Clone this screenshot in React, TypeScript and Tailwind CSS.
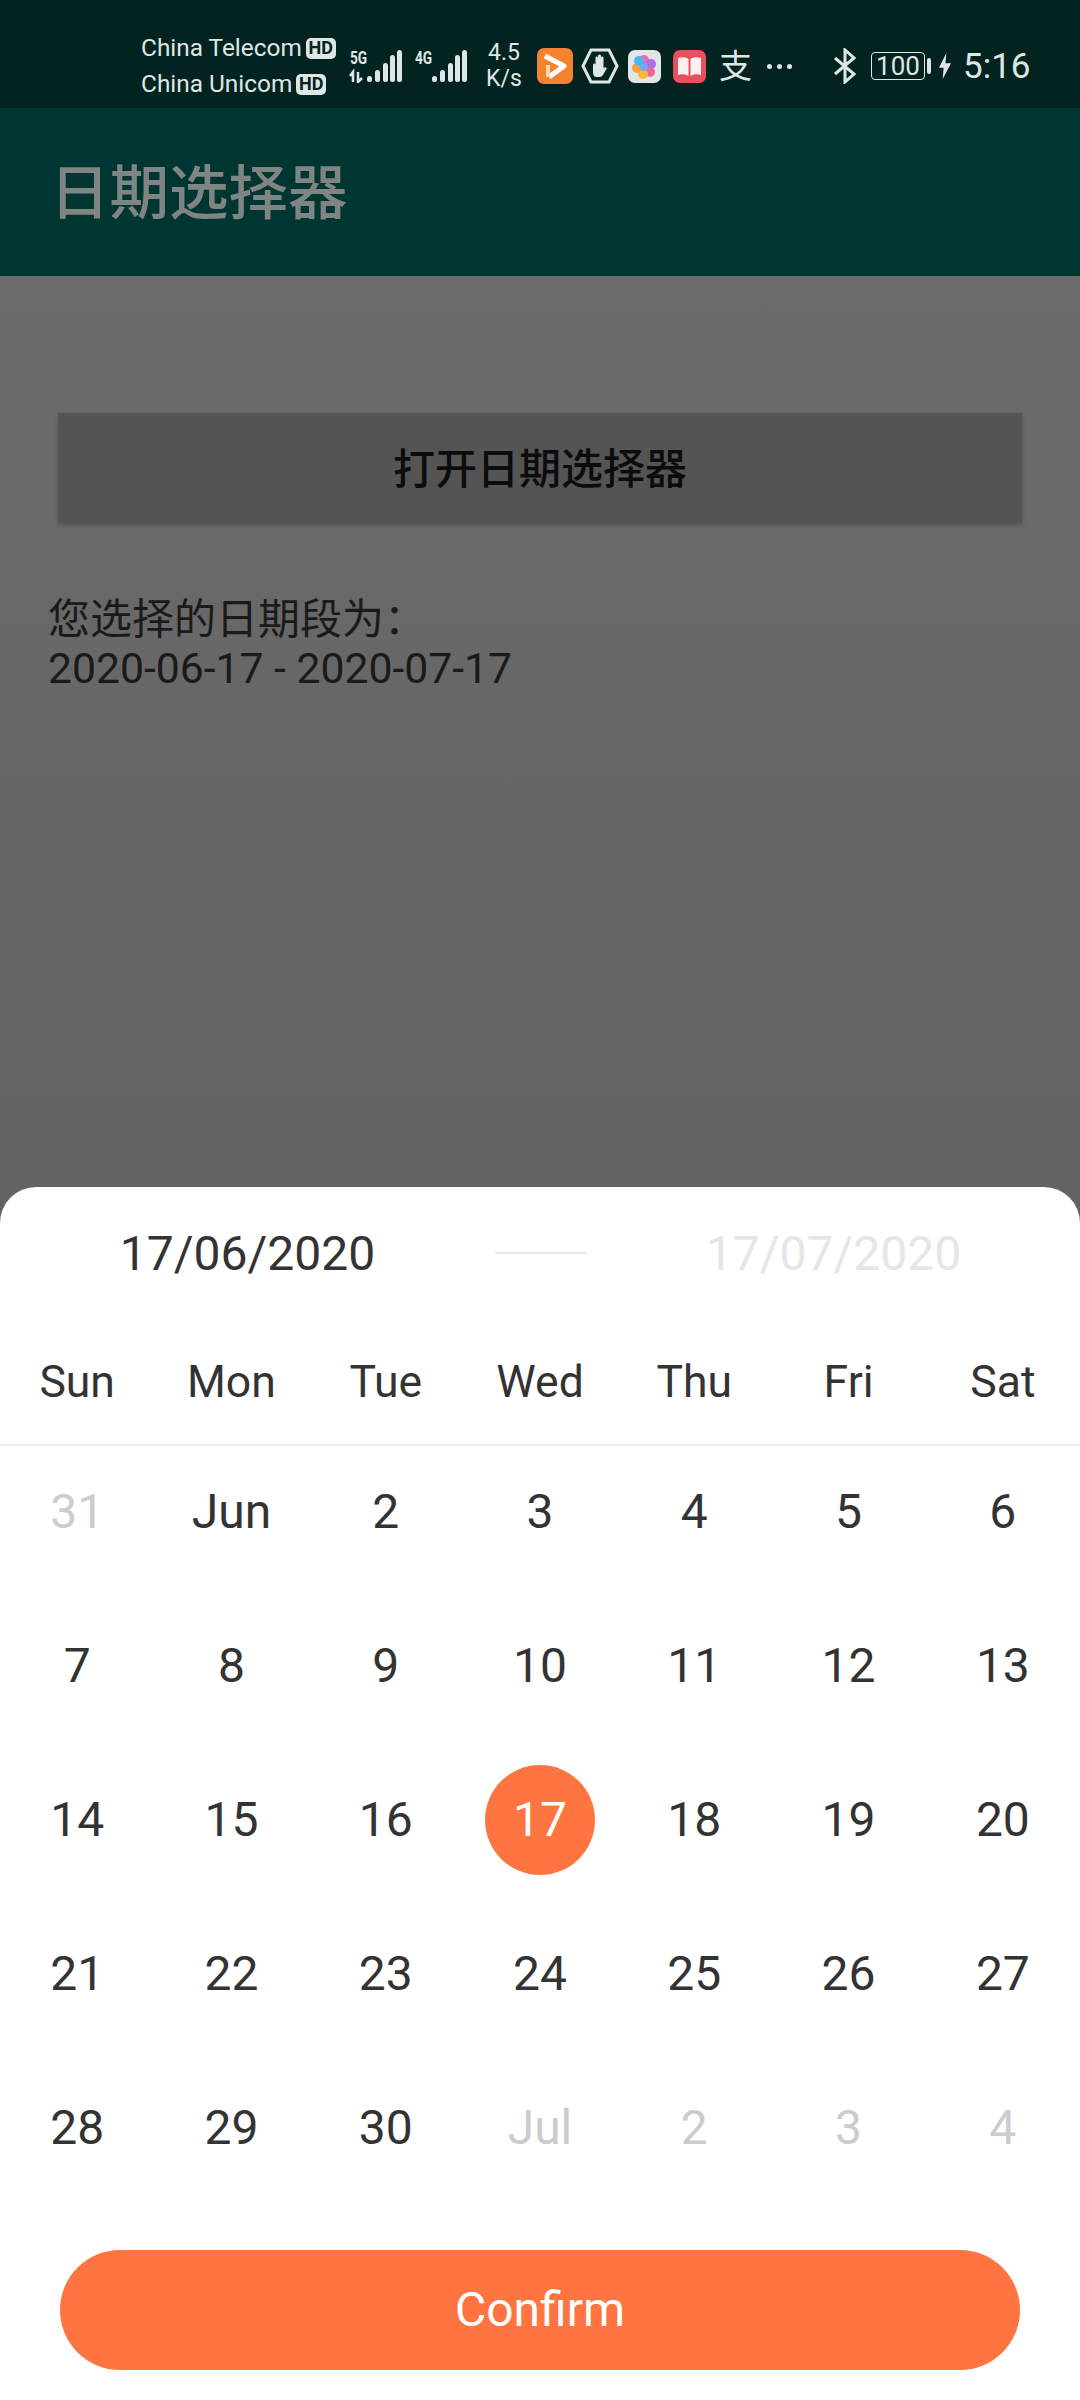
const font = "font-['Roboto','Noto_Sans_CJK_SC',sans-serif]";

const weekDays = ["Sun", "Mon", "Tue", "Wed", "Thu", "Fri", "Sat"];

const weeks = [
  ["31", "Jun", "2", "3", "4", "5", "6"],
  ["7", "8", "9", "10", "11", "12", "13"],
  ["14", "15", "16", "17", "18", "19", "20"],
  ["21", "22", "23", "24", "25", "26", "27"],
  ["28", "29", "30", "Jul", "2", "3", "4"],
];

function isMuted(week: number, day: number) {
  return (week === 0 && day === 0) || (week === 4 && day >= 3);
}

function HdBadge() {
  return (
    <span className="ml-[4px] flex h-[21px] w-[30px] items-center justify-center rounded-[5px] bg-[#dfe7e6] text-[18px] font-bold leading-none text-[#02231f]">
      HD
    </span>
  );
}

function Signal({ label, arrows }: { label: string; arrows?: boolean }) {
  const bars = [
    { x: 19, top: 27 },
    { x: 27, top: 21 },
    { x: 35, top: 14 },
    { x: 42, top: 6 },
    { x: 49, top: 1 },
  ];
  return (
    <svg width="58" height="40" viewBox="0 -6 58 40" className="mt-[-6px] text-[#dfe7e6]">
      <text
        transform="translate(2 15) scale(0.72 1)"
        fontFamily="Roboto"
        fontSize="19"
        fontWeight="700"
        fill="currentColor"
      >
        {label}
      </text>
      {arrows && (
        <path
          d="M2 27l3-4v10M10 23v10l4-4"
          stroke="currentColor"
          strokeWidth="2.5"
          fill="none"
        />
      )}
      {bars.map((b) => (
        <rect key={b.x} x={b.x} y={b.top} width="5" height={33 - b.top} rx="2.5" fill="currentColor" />
      ))}
    </svg>
  );
}

function StatusBar() {
  return (
    <div className="flex h-[108px] items-center bg-[#02231f] pl-[141px] pt-[24px] text-[#dfe7e6]">
      <div className="flex w-[207px] flex-col gap-[12px] text-[24.4px] leading-[24px]">
        <div className="flex items-center">China Telecom<HdBadge /></div>
        <div className="flex items-center">China Unicom<HdBadge /></div>
      </div>
      <div className="flex w-[130px] gap-[7px]">
        <Signal label="5G" arrows />
        <Signal label="4G" />
      </div>
      <div className="flex w-[52px] flex-col items-center text-[23px] leading-[26px]">
        <span>4.5</span>
        <span>K/s</span>
      </div>
      <svg width="36" height="36" viewBox="0 0 36 36" className="ml-[7px]">
        <rect width="36" height="36" rx="7" fill="#f5822f" />
        <path d="M8 8l19 10-15 11" fill="none" stroke="#fff" strokeWidth="5" strokeLinejoin="round" />
        <path d="M11 17v12" fill="none" stroke="#fbd9a8" strokeWidth="4" />
      </svg>
      <svg width="38" height="36" viewBox="0 0 38 36" className="ml-[8px]">
        <path d="M10 2h18l8 16-8 16H10L2 18z" fill="none" stroke="#dfe7e6" strokeWidth="3" />
        <path
          d="M12 17c0-2 2-2 2.500-.5V10c0-2 2.500-2 2.500 0V8c0-2 3-2 3 0v2c0-2 2.500-2 2.500 0v10c2-2 4 0 3 1l-3 5c-1 2-2 3-4 3h-3c-3 0-3.500-3-3.500-6z"
          fill="#dfe7e6"
        />
      </svg>
      <svg width="33" height="33" viewBox="0 0 33 33" className="ml-[9px]">
        <rect width="33" height="33" rx="7" fill="#e3e6e6" />
        <circle cx="16" cy="10" r="5" fill="#f06bb0" />
        <circle cx="23" cy="14" r="5" fill="#b06bf0" />
        <circle cx="22" cy="22" r="5" fill="#f0649a" />
        <circle cx="15" cy="24" r="5" fill="#f5b83a" />
        <circle cx="9" cy="18" r="5" fill="#f7a23a" />
        <circle cx="11" cy="11" r="5" fill="#4cb8f0" />
        <circle cx="16" cy="17" r="4" fill="#6fa8f5" />
      </svg>
      <svg width="33" height="33" viewBox="0 0 33 33" className="ml-[12px]">
        <rect width="33" height="33" rx="7" fill="#e9505e" />
        <path d="M5 8c4-1 8-1 10.500 1v17c-3-2-6.500-2-10.500-1zM28 8c-4-1-8-1-10.500 1v17c3-2 6.500-2 10.500-1z" fill="#fdeef0" />
      </svg>
      <span className="ml-[13px] w-[33px] text-[33px] leading-none">支</span>
      <span className="ml-[15px] flex gap-[5px]">
        <span className="h-[5px] w-[5px] rounded-full bg-[#dfe7e6]" />
        <span className="h-[5px] w-[5px] rounded-full bg-[#dfe7e6]" />
        <span className="h-[5px] w-[5px] rounded-full bg-[#dfe7e6]" />
      </span>
      <svg width="24" height="36" viewBox="0 0 24 36" className="ml-[41px]">
        <path d="M2 10l19 16-9 8V2l9 8L2 26" fill="none" stroke="#dfe7e6" strokeWidth="3" />
      </svg>
      <div className="ml-[14px] flex h-[28px] w-[54px] items-center justify-center rounded-[4px] border-[1.5px] border-[#dfe7e6] text-[26px] leading-none">
        100
      </div>
      <span className="ml-[2px] h-[16px] w-[4px] rounded-[2px] bg-[#dfe7e6]" />
      <svg width="14" height="26" viewBox="0 0 13 28" className="ml-[7px]">
        <path d="M8 0L0 16h5l-1 12 9-17H7z" fill="#dfe7e6" />
      </svg>
      <span className="ml-[11px] text-[35px] leading-none">5:16</span>
    </div>
  );
}

export default function App() {
  return (
    <div className={`flex h-[2400px] w-[1080px] flex-col overflow-hidden bg-[#636363] ${font}`}>
      <StatusBar />
      <div className="flex h-[168px] items-center bg-[#003631] pl-[50px] pt-[5px]">
        <h1 className="text-[59.500px] leading-none font-medium text-[#7f8583]">日期选择器</h1>
      </div>
      <main className="h-[911px] bg-gradient-to-b from-[#6b6b6b] to-[#636363] pt-[137px]">
        <div className="mx-[58px] flex h-[110px] items-center justify-center bg-[#545454] pt-[3px] text-[42px] font-medium text-[#0c0c0c] shadow-[0_2px_4px_rgba(0,0,0,0.2)]">
          打开日期选择器
        </div>
        <div className="mt-[72px] pl-[48px] text-[42px] leading-[49px] text-[#1a1a1a]">
          <p>您选择的日期段为：</p>
          <p className="text-[42.7px]">2020-06-17 - 2020-07-17</p>
        </div>
      </main>
      <section className="flex flex-1 flex-col rounded-t-[36px] bg-white">
        <div className="flex h-[133px] items-center text-[48px] leading-none">
          <span className="w-[495px] text-center text-[#333333]">17/06/2020</span>
          <span className="mb-[2px] h-[2px] w-[91px] bg-[#e6e6e6]" />
          <span className="flex-1 pl-[2px] pr-[1px] text-center text-[#e6e6e6]">17/07/2020</span>
        </div>
        <div className="grid h-[126px] grid-cols-7 items-center border-b-2 border-[#eeeeee] text-[44.5px] text-[#333333]">
          {weekDays.map((d) => (
            <span key={d} className="text-center">{d}</span>
          ))}
        </div>
        <div className="mt-[-11px] grid grid-cols-7">
          {weeks.flatMap((week, w) =>
            week.map((day, d) => {
              const selected = w === 2 && d === 3;
              return (
                <div key={`${w}-${d}`} className="flex h-[154px] items-center justify-center text-[48px]">
                  <span
                    className={
                      selected
                        ? "flex h-[110px] w-[110px] items-center justify-center rounded-full bg-[#ff7541] text-white"
                        : isMuted(w, d)
                          ? "text-[#cccccc]"
                          : "text-[#333333]"
                    }
                  >
                    {day}
                  </span>
                </div>
              );
            }),
          )}
        </div>
        <button className="mx-[60px] mt-[45px] flex h-[120px] items-center justify-center rounded-[60px] bg-[#ff7541] text-[48px] text-white">
          Confirm
        </button>
      </section>
    </div>
  );
}
